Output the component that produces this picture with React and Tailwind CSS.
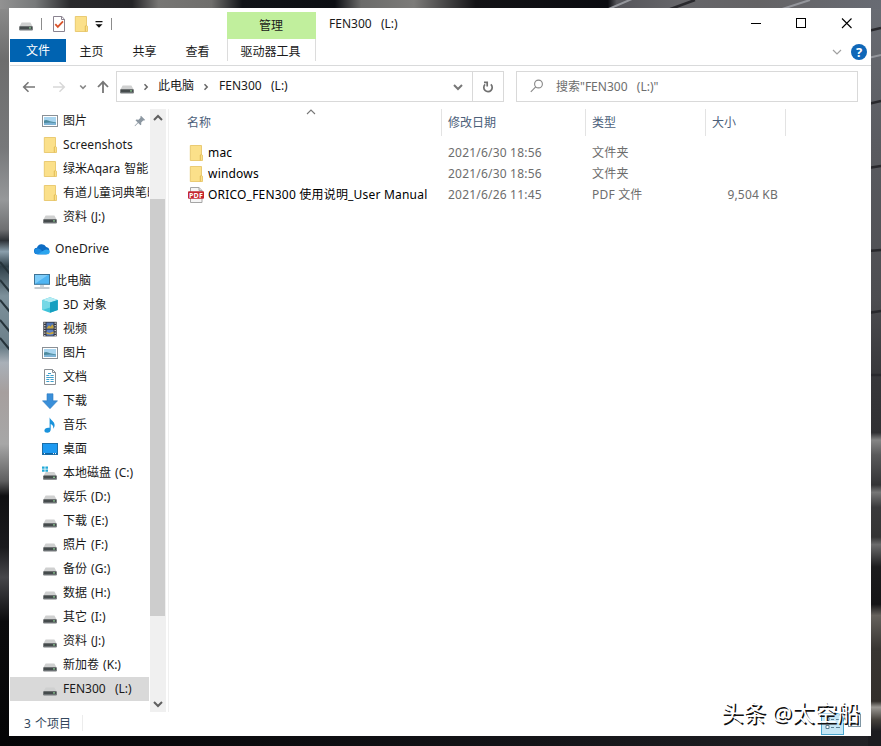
import React from 'react';

const QUICK_ACCESS = [
  { label: '图片', icon: 'picture', pinned: true },
  { label: 'Screenshots', icon: 'folder' },
  { label: '绿米Aqara 智能', icon: 'folder' },
  { label: '有道儿童词典笔时', icon: 'folder' },
  { label: '资料 (J:)', icon: 'drive' },
];

const THIS_PC = [
  { label: '3D 对象', icon: 'cube' },
  { label: '视频', icon: 'video' },
  { label: '图片', icon: 'picture' },
  { label: '文档', icon: 'document' },
  { label: '下载', icon: 'download' },
  { label: '音乐', icon: 'music' },
  { label: '桌面', icon: 'desktop' },
  { label: '本地磁盘 (C:)', icon: 'system' },
  { label: '娱乐 (D:)', icon: 'drive' },
  { label: '下载 (E:)', icon: 'drive' },
  { label: '照片 (F:)', icon: 'drive' },
  { label: '备份 (G:)', icon: 'drive' },
  { label: '数据 (H:)', icon: 'drive' },
  { label: '其它 (I:)', icon: 'drive' },
  { label: '资料 (J:)', icon: 'drive' },
  { label: '新加卷 (K:)', icon: 'drive' },
  { label: 'FEN300\u00a0\u00a0 (L:)', icon: 'drive', selected: true },
];

const FILES = [
  { name: 'mac', icon: 'folder', date: '2021/6/30 18:56', type: '文件夹', size: '' },
  { name: 'windows', icon: 'folder', date: '2021/6/30 18:56', type: '文件夹', size: '' },
  { name: 'ORICO_FEN300 使用说明_User Manual', icon: 'pdf', date: '2021/6/26 11:45', type: 'PDF 文件', size: '9,504 KB' },
];

const DriveShape = () => (
  <>
    <path d="M3.6 6.600h8.800l2.200 4H1.400z" fill="#cfd0d0" />
    <rect x="1.300" y="10.200" width="13.400" height="4" rx=".6" fill="#454b4c" />
    <rect x="1.300" y="13.200" width="13.400" height="1" rx=".5" fill="#7b8082" />
    <rect x="11.200" y="11.300" width="1.600" height="1.200" fill="#9be8a4" />
  </>
);

const SHAPES = {
  drive: <DriveShape />,
  system: (
    <>
      <g transform="translate(0 .4)"><DriveShape /></g>
      <path d="M0 1.500h2.600v2.200H0zM3.400 1.500H6v2.200H3.400zM0 4.500h2.600v2.200H0zM3.400 4.500H6v2.200H3.400z" fill="#22a9d8" />
    </>
  ),
  folder: (
    <>
      <path d="M2.300.5h11.200v9.300l1 .4v5.300H2.300z" fill="#fbe08a" stroke="#e4c260" strokeWidth=".8" />
      <path d="M12.300 15.400V10l1.200-.6" fill="none" stroke="#e0b94e" strokeWidth=".9" />
    </>
  ),
  picture: (
    <>
      <rect x=".5" y="2.500" width="15" height="11" fill="#fff" stroke="#8a9096" />
      <rect x="2" y="4" width="12" height="8" fill="#a9d5ef" />
      <path d="M2 7.500c2-1.200 4-.5 6 .8l6 1.200V12H2z" fill="#4d8a9d" />
      <path d="M2 10c4-.6 8-.8 12 .2V12H2z" fill="#7fb4d6" />
    </>
  ),
  cube: (
    <>
      <path d="M8 .3L15.800 3v10L8 15.800.3 13V3z" fill="#3fc3d9" />
      <path d="M.3 3L8 .3 15.800 3 8 5.400z" fill="#b4ecf3" />
      <path d="M8 5.400L15.800 3v10L8 15.800z" fill="#159fc0" />
      <path d="M.3 3L8 5.400v5L.3 13z" fill="#76d8e6" />
    </>
  ),
  video: (
    <>
      <rect x="1.300" y=".8" width="13.400" height="14.600" fill="#34363d" />
      <path d="M2.800 1.500v14M13.200 1.500v14" stroke="#e7e7e7" strokeWidth="1.200" strokeDasharray="1.3 1.2" />
      <rect x="4.500" y="1.600" width="7" height="6" fill="#5276b4" />
      <rect x="4.500" y="8.600" width="7" height="6" fill="#5b7fc6" />
      <path d="M4.500 7.600l2.400-3.400 1.800 1.600 1.500-2.600 1.300 2v2.400zM4.500 11l3 1 4-1.500v2.200l-3.400.7-3.600-.6z" fill="#c9a53a" />
    </>
  ),
  document: (
    <>
      <path d="M2.500.5h8l3 3v12h-11z" fill="#fff" stroke="#8b9094" />
      <path d="M10.500.5v3h3" fill="none" stroke="#8b9094" />
      <path d="M6 4.500h3M4.300 6.500h3M8.500 6.500h3.200M4.300 8.500h7.400M4.300 10.500h3M4.300 12.500h3M8.500 10.500h3.200M8.500 12.500h3.200" stroke="#3e9fcc" />
    </>
  ),
  download: <path d="M5 .8h6v7h4.500L8 15.700.5 7.800H5z" fill="#3a8fd9" stroke="#2d7bc0" strokeWidth=".6" />,
  music: (
    <path d="M7.600.3c.6 2.800 5 4 5 7.800 0 1.600-.6 2.800-1.400 3.700.5-2.600-.6-4.200-2.500-4.800v5.500c0 2-1.500 3.300-3.500 3.300-1.700 0-2.800-1-2.800-2.300 0-1.900 2.300-3.200 5.200-2.700z" fill="#1a93dc" />
  ),
  desktop: (
    <>
      <rect x=".5" y="2.500" width="15" height="11" fill="#1e9af1" stroke="#1b6ea8" />
      <path d="M1 12.600h14" stroke="#0f5d99" />
      <path d="M2 12.600h1M11 12.600h1M13 12.600h1" stroke="#fff" />
    </>
  ),
  pc: (
    <>
      <rect x=".5" y="1.500" width="15" height="9.800" fill="#4fb5f3" stroke="#3d7396" />
      <path d="M1 10.800V2h13z" fill="#7dccf9" />
      <path d="M6 13h4" stroke="#9fb0bb" />
      <path d="M.5 15h15" stroke="#8a98a3" />
    </>
  ),
  cloud: (
    <>
      <path d="M3.200 13.200A3.200 3.200 0 0 1 3 6.800 5 5 0 0 1 12.200 6a3.700 3.700 0 0 1 .5 7.200z" fill="#0d6cc4" />
      <path d="M3.200 13.200A3.200 3.200 0 0 1 1 8c3-1.600 5 .2 6.500 1.400l5 3.800z" fill="#1c8be0" />
      <path d="M4 13.200l6-4c2.600-1.200 5-.4 5.800 1.200a2.900 2.900 0 0 1-3 2.800z" fill="#2ba5ee" />
    </>
  ),
  pdf: (
    <>
      <path d="M2.500.5h8.500l3 3v12H2.500z" fill="#f5f5f5" stroke="#a5a5a5" />
      <path d="M11 .5v3h3" fill="#ddd" stroke="#a5a5a5" />
      <rect x="0" y="4.200" width="16" height="7.600" rx="1" fill="#c4262e" />
      <text x="8" y="10.500" textAnchor="middle" fontSize="7" fontWeight="700" fill="#fff" fontFamily="Open Sans, sans-serif">PDF</text>
    </>
  ),
};

function Icon({ name, className = '' }) {
  return (
    <svg viewBox="0 0 16 16" className={`w-4 h-4 shrink-0 ${className}`}>
      {SHAPES[name]}
    </svg>
  );
}

function Chevron({ d, className = '', width = 1.5 }) {
  return (
    <svg viewBox="0 0 10 10" className={`w-2.5 h-2.5 shrink-0 ${className}`} fill="none" stroke="currentColor" strokeWidth={width}>
      <path d={d} />
    </svg>
  );
}

const UP = 'M1 7l4-4 4 4';
const DOWN = 'M1 3l4 4 4-4';
const RIGHT = 'M3.5 2.300L6.200 5 3.500 7.700';

// Blurred desktop photo behind the window
function Wallpaper() {
  return (
    <svg className="absolute inset-0" width="881" height="746" viewBox="0 0 881 746" preserveAspectRatio="none">
      <defs>
        <linearGradient id="top">
          <stop offset="0" stopColor="#929292" />
          <stop offset=".04" stopColor="#77797a" />
          <stop offset=".08" stopColor="#29292c" />
          <stop offset=".15" stopColor="#242427" />
          <stop offset=".18" stopColor="#777674" />
          <stop offset=".24" stopColor="#6f6e6c" />
          <stop offset=".275" stopColor="#111318" />
          <stop offset=".38" stopColor="#0c0e13" />
          <stop offset=".41" stopColor="#6b6b6a" />
          <stop offset=".47" stopColor="#7c7b79" />
          <stop offset=".54" stopColor="#131316" />
          <stop offset=".69" stopColor="#0a0b10" />
          <stop offset=".7" stopColor="#55555a" />
          <stop offset=".77" stopColor="#66666a" />
          <stop offset=".86" stopColor="#646365" />
          <stop offset="1" stopColor="#686b73" />
        </linearGradient>
        <linearGradient id="left" x2="0" y2="1">
          <stop offset="0" stopColor="#8f8f8f" />
          <stop offset=".08" stopColor="#6d6d6d" />
          <stop offset=".2" stopColor="#77787a" />
          <stop offset=".27" stopColor="#96989a" />
          <stop offset=".31" stopColor="#6f7072" />
          <stop offset=".325" stopColor="#2d3136" />
          <stop offset=".34" stopColor="#8b9fac" />
          <stop offset=".36" stopColor="#2f4049" />
          <stop offset=".4" stopColor="#7d919b" />
          <stop offset=".47" stopColor="#6b7f89" />
          <stop offset=".49" stopColor="#a9b0b8" />
          <stop offset=".53" stopColor="#a69f9e" />
          <stop offset=".6" stopColor="#a7a7a7" />
          <stop offset=".65" stopColor="#5f5f60" />
          <stop offset=".67" stopColor="#101012" />
          <stop offset=".74" stopColor="#1b1b1e" />
          <stop offset=".78" stopColor="#46464a" />
          <stop offset=".84" stopColor="#0b0b0d" />
          <stop offset="1" stopColor="#050506" />
        </linearGradient>
        <linearGradient id="right" x2="0" y2="1">
          <stop offset="0" stopColor="#6a6d74" />
          <stop offset=".2" stopColor="#5a5b60" />
          <stop offset=".4" stopColor="#4d4d51" />
          <stop offset=".5" stopColor="#38383b" />
          <stop offset=".58" stopColor="#303033" />
          <stop offset=".59" stopColor="#858585" />
          <stop offset=".61" stopColor="#59595a" />
          <stop offset=".65" stopColor="#343436" />
          <stop offset=".66" stopColor="#777" />
          <stop offset=".68" stopColor="#3a3a3c" />
          <stop offset=".72" stopColor="#343434" />
          <stop offset=".73" stopColor="#6b6b6c" />
          <stop offset=".76" stopColor="#1c1c1e" />
          <stop offset=".81" stopColor="#151517" />
          <stop offset=".825" stopColor="#66625d" />
          <stop offset=".87" stopColor="#393632" />
          <stop offset=".94" stopColor="#332f2b" />
          <stop offset=".948" stopColor="#9b9893" />
          <stop offset=".965" stopColor="#45413c" />
          <stop offset=".98" stopColor="#1c1c20" />
        </linearGradient>
        <linearGradient id="bottom">
          <stop offset="0" stopColor="#050507" />
          <stop offset=".6" stopColor="#141418" />
          <stop offset="1" stopColor="#222226" />
        </linearGradient>
      </defs>
      <rect width="881" height="746" fill="url(#bottom)" />
      <rect width="12" height="740" fill="url(#left)" />
      <rect x="868" width="13" height="746" fill="url(#right)" />
      <rect width="881" height="9" fill="url(#top)" />
      <path d="M604 11l28-12M776 11l34-11M868 58l13-3" stroke="#94969c" strokeWidth="2" />
      <path d="M665 11l30-11M868 31l13-3M868 104l13-3M868 168l13-2M868 251l13-1M868 313l13-2M868 375h13" stroke="#29292d" strokeWidth="2.500" />
      <path d="M0 262l10 12M0 280l10 12M0 300l10 12M0 320l10 12M0 338l10 12" stroke="#26343b" strokeWidth="2" />
    </svg>
  );
}

function TitleBar() {
  return (
    <div className="flex h-[31px]">
      <div className="flex items-center w-[217px] pl-2 h-[31px]">
        <Icon name="drive" />
        <div className="w-px h-3 ml-[7px] bg-[#8c8c8c]" />
        <svg viewBox="0 0 16 16" className="w-4 h-4 ml-[9px]" fill="none">
          <path d="M2.500.5h8.300l2.700 2.700v12.300h-11z" fill="#fff" stroke="#8a8390" />
          <path d="M10.500.5v3h3" stroke="#8a8390" />
          <path d="M4.300 8.200l2.500 2.700 5.200-5.500" stroke="#d9532c" strokeWidth="1.800" />
        </svg>
        <Icon name="folder" className="ml-[6px]" />
        <svg viewBox="0 0 8 8" className="w-2 h-2 ml-[6px] mt-[2px]">
          <path d="M.5 0h7v1.200h-7zM.5 3.200h7L4 6.700z" fill="#111" />
        </svg>
        <div className="w-px h-3 ml-[8px] bg-[#8c8c8c]" />
      </div>
      <div className="w-[89px] h-[27px] mt-1 pr-px bg-[#c1ef9d] flex items-center justify-center">管理</div>
      <div className="pl-[13px] pt-2 grow">FEN300&nbsp;&nbsp; (L:)</div>
      <svg width="122" height="31" viewBox="0 0 122 31" fill="none" stroke="#000" className="shrink-0">
        <path d="M2 15.500h10M47.500 10.500h9v9h-9z" shapeRendering="crispEdges" />
        <path d="M93 10.500l9.500 9.500M102.500 10.500l-9.500 9.500" strokeWidth="1.100" />
      </svg>
    </div>
  );
}

function RibbonTabs() {
  return (
    <div className="flex h-[27px] border-b border-[#d9dadb]">
      <div className="w-14 h-[23px] bg-[#0063b1] text-white flex items-center justify-center">文件</div>
      <div className="w-[53px] h-[26px] pr-[2px] flex items-center justify-center">主页</div>
      <div className="w-[53px] h-[26px] pr-[2px] flex items-center justify-center">共享</div>
      <div className="w-[53px] h-[26px] pr-[2px] flex items-center justify-center">查看</div>
      <div className="w-[89px] h-[22px] ml-[2px] border-x border-[#dcdcdc] flex items-center justify-center pt-1 pr-[2px]">驱动器工具</div>
      <div className="grow" />
      <Chevron d={DOWN} className="mt-2 mr-[9px] text-[#a0a0a0]" width={1.2} />
      <div className="w-4 h-4 mt-[5px] mr-1 rounded-full bg-[#0f67b8] text-white text-[13px] font-bold flex items-center justify-center">?</div>
    </div>
  );
}

function AddressBar() {
  return (
    <div className="flex h-[42px] pt-[5px]">
      <div className="flex items-center w-[106px] h-[31px] pl-[12px] text-[#777]">
        <svg viewBox="0 0 14 14" className="w-3.5 h-3.5" fill="none" stroke="currentColor" strokeWidth="1.600">
          <path d="M13 7H2M6.500 2.200L1.700 7l4.800 4.800" />
        </svg>
        <svg viewBox="0 0 14 14" className="w-3.5 h-3.5 ml-4 text-[#d8d8d8]" fill="none" stroke="currentColor" strokeWidth="1.500">
          <path d="M1 7h11M7.500 2.200L12.300 7l-4.800 4.800" />
        </svg>
        <svg viewBox="0 0 8 8" className="w-2 h-2 ml-[13px]" fill="none" stroke="#888" strokeWidth="1.600">
          <path d="M1.200 2.500L4 5.300l2.800-2.800" />
        </svg>
        <svg viewBox="0 0 14 14" className="w-3.5 h-3.5 ml-[9px]" fill="none" stroke="currentColor" strokeWidth="1.800">
          <path d="M7 13V2M2 7l5-5.200L12 7" />
        </svg>
      </div>
      <div className="flex items-center w-[388px] h-[31px] border border-[#d9d9d9]">
        <Icon name="drive" className="ml-[2px]" />
        <Chevron d={RIGHT} className="ml-[6px] text-[#666]" width={1.5} />
        <span className="ml-[7px] -mt-px">此电脑</span>
        <Chevron d={RIGHT} className="ml-[7px] text-[#666]" width={1.5} />
        <span className="ml-[8px] -mt-px">FEN300&nbsp;&nbsp; (L:)</span>
        <div className="grow" />
        <Chevron d={DOWN} className="mr-[9px] text-[#777]" width={2} />
        <div className="w-[31px] h-full border-l border-[#d9d9d9] flex items-center justify-center">
          <svg viewBox="0 0 12 12" className="w-3 h-3" fill="none" stroke="#707070" strokeWidth="1.700">
            <path d="M8.800 3.300A4.200 4.200 0 1 1 3.100 3.400" />
            <path d="M3 1.400h3.200v4.200" transform="translate(-1 0)" />
          </svg>
        </div>
      </div>
      <div className="flex items-center w-[342px] h-[31px] ml-3 border border-[#d9d9d9] text-[#6d6d6d]">
        <svg viewBox="0 0 14 14" className="w-3.5 h-3.5 ml-[13px] mr-[12px] -mt-[2px]" fill="none" stroke="#888" strokeWidth="1.100">
          <circle cx="8.500" cy="5" r="3.900" />
          <path d="M5.700 7.900L.8 12.800" />
        </svg>
        搜索"FEN300&nbsp;&nbsp; (L:)"
      </div>
    </div>
  );
}

function TreeItem({ item, root }) {
  return (
    <div className={`flex items-center h-6 shrink-0 whitespace-nowrap ${root ? 'pl-6' : 'pl-8'} ${item.selected ? 'bg-[#d9d9d9]' : '[word-spacing:1px]'}`}>
      <Icon name={item.icon} />
      <span className={`ml-[5px] ${/^[A-Z]\w+$/.test(item.label) ? 'tracking-[0.12px]' : ''}`}>{item.label}</span>
      {item.pinned && (
        <svg viewBox="0 0 12 12" className="w-3 h-3 ml-auto mr-[3px]">
          <path d="M7 .8L11.200 5l-1 .6-1-.2-2 2 .1 2.200-.8.700L4.200 8 1 11.200l-.4-.4L3.700 7.500 1.500 5.300l.8-.8 2.200.2 2-2-.2-1z" fill="#8c97a1" />
        </svg>
      )}
    </div>
  );
}

function NavPane() {
  return (
    <div className="flex w-[159px] h-[603px] border-r border-[#f0f0f0] shrink-0">
      <div className="flex flex-col w-[139px] overflow-hidden">
        {QUICK_ACCESS.map(item => <TreeItem key={item.label} item={item} />)}
        <div className="h-2 shrink-0" />
        <TreeItem root item={{ label: 'OneDrive', icon: 'cloud' }} />
        <div className="h-2 shrink-0" />
        <TreeItem root item={{ label: '此电脑', icon: 'pc' }} />
        {THIS_PC.map(item => <TreeItem key={item.label} item={item} />)}
      </div>
      <div className="flex flex-col items-center w-[16px] ml-px bg-[#f0f0f0] text-[#606060]">
        <Chevron d={UP} className="mt-1 mr-px" width={2} />
        <div className="w-[15px] h-[417px] mt-[76px] mr-px bg-[#cdcdcd]" />
        <div className="grow" />
        <Chevron d={DOWN} className="mb-[3px] mr-px" width={2} />
      </div>
    </div>
  );
}

function FileList() {
  return (
    <div className="grow pl-[12px]">
      <div className="flex h-[27px] text-[#4c607a]">
        <div className="flex w-[261px] pl-[6px] border-r border-[#e3e3e3]">
          <span className="pt-[6px] w-[119px]">名称</span>
          <Chevron d={UP} className="-mt-[2px] text-[#777]" width={1.1} />
        </div>
        <div className="w-[144px] pl-[6px] pt-[6px] border-r border-[#e3e3e3]">修改日期</div>
        <div className="w-[120px] pl-[6px] pt-[6px] border-r border-[#e3e3e3]">类型</div>
        <div className="w-[80px] pl-[6px] pt-[6px] border-r border-[#e3e3e3]">大小</div>
      </div>
      <div className="pt-[6px]">
        {FILES.map(file => (
          <div key={file.name} className="flex items-center h-[21px] text-[#6d6d6d] whitespace-nowrap tracking-[0.2px]">
            <div className="flex items-center w-[267px] pl-[7px] text-black">
              <Icon name={file.icon} />
              <span className="ml-1">{file.name}</span>
            </div>
            <div className="w-[144px]">{file.date}</div>
            <div className="w-[106px]">{file.type}</div>
            <div className="w-[80px] text-right">{file.size}</div>
          </div>
        ))}
      </div>
    </div>
  );
}

function StatusBar() {
  return (
    <div className="flex items-start h-6 pl-[14px] text-[#33475c]">
      <span className="pt-1 w-[58px] [word-spacing:1px]">3 个项目</span>
      <div className="w-px h-4 mt-[3px] bg-[#ececec]" />
      <div className="grow" />
      <svg width="42" height="24" viewBox="0 0 42 24" fill="none" className="mr-[8px]">
        <rect x=".5" y="1.500" width="22" height="21" fill="#c5e6f5" stroke="#4aa6cf" />
        <path d="M5 5.500h3v3H5zM5 13.500h3v3H5z" fill="#fff" stroke="#5c7f92" />
        <path d="M10 7.500h3M15 7.500h4M10 15.500h3M15 15.500h4" stroke="#5c7f92" />
        <rect x="27.500" y="2.500" width="12" height="12" fill="#fff" stroke="#7f96a3" />
        <path d="M29 11.500l3-3 3 2 3-1v3h-9z" fill="#8fb9cf" />
      </svg>
    </div>
  );
}

export default function App() {
  return (
    <div className="relative w-[881px] h-[746px] overflow-hidden bg-[#111114] pl-[9px] pt-2 text-xs leading-4 text-[#1a1a1a] font-['Noto_Sans','Noto_Sans_CJK_SC',sans-serif]">
      <Wallpaper />
      <div className="relative flex flex-col w-[862px] h-[728px] pl-px bg-white">
        <TitleBar />
        <RibbonTabs />
        <AddressBar />
        <div className="flex h-[604px] pt-px">
          <NavPane />
          <FileList />
        </div>
        <StatusBar />
      </div>
      {/* Watermark */}
      <div className="absolute left-[721px] top-[699px] text-[22.5px] leading-7 whitespace-nowrap text-white [text-shadow:1.500px_1.500px_0_#111]">
        头条 @太空船
      </div>
    </div>
  );
}
